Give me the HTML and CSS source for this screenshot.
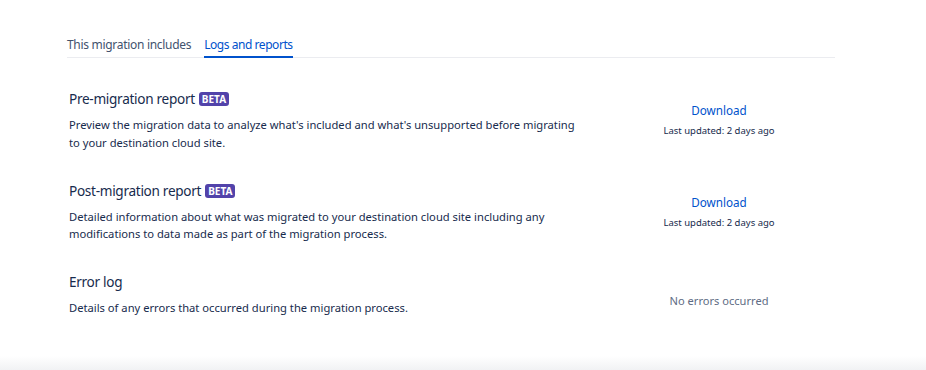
FILE: index.html
```html
<!DOCTYPE html>
<html>
<head>
<meta charset="utf-8">
<link rel="stylesheet" href="styles.css">
</head>
<body>
<div class="page">
  <div class="content">
    <nav class="tabs">
      <span class="tab">This migration includes</span>
      <span class="tab active">Logs and reports</span>
    </nav>
    <div class="rows">
      <div class="row">
        <div class="info">
          <h3 class="title">Pre-migration report <span class="lozenge">Beta</span></h3>
          <p class="desc">Preview the migration data to analyze what's included and what's unsupported before migrating to your destination cloud site.</p>
        </div>
        <div class="action">
          <a class="link">Download</a>
          <span class="meta">Last updated: 2 days ago</span>
        </div>
      </div>
      <div class="row">
        <div class="info">
          <h3 class="title">Post-migration report <span class="lozenge">Beta</span></h3>
          <p class="desc">Detailed information about what was migrated to your destination cloud site including any modifications to data made as part of the migration process.</p>
        </div>
        <div class="action">
          <a class="link">Download</a>
          <span class="meta">Last updated: 2 days ago</span>
        </div>
      </div>
      <div class="row">
        <div class="info">
          <h3 class="title">Error log</h3>
          <p class="desc">Details of any errors that occurred during the migration process.</p>
        </div>
        <div class="action action-low">
          <span class="muted">No errors occurred</span>
        </div>
      </div>
    </div>
  </div>
  <div class="footer"></div>
</div>
</body>
</html>
```
FILE: styles.css
```css
* { box-sizing: border-box; }
html, body { margin: 0; padding: 0; background: #fff; }
body {
  font-family: "Noto Sans", "Open Sans", sans-serif;
  color: #172B4D;
  width: 926px;
  height: 370px;
  overflow: hidden;
}
.page {
  display: flex;
  flex-direction: column;
  height: 370px;
}
.content {
  flex: 1;
  padding: 34px 91px 0 67px;
}
.tabs {
  display: flex;
  gap: 13px;
  border-bottom: 1px solid #EBECF0;
  height: 24px;
}
.tab {
  font-size: 12px;
  letter-spacing: -0.3px;
  line-height: 21px;
  color: #42526E;
  height: 24px;
}
.tab.active {
  color: #0052CC;
  border-bottom: 2px solid #0052CC;
  letter-spacing: -0.45px;
}
.rows {
  display: flex;
  flex-direction: column;
  padding-top: 31px;
  gap: 29.5px;
}
.row {
  display: grid;
  grid-template-columns: 516px 232px;
  column-gap: 20px;
  align-items: center;
}
.info { padding-left: 2px; }
.title {
  margin: 0;
  font-size: 13.6px;
  letter-spacing: -0.3px;
  font-weight: 400;
  line-height: 20px;
  color: #172B4D;
  display: flex;
  align-items: center;
  gap: 4px;
}
.lozenge {
  display: inline-block;
  background: #5243AA;
  color: #fff;
  font-size: 10px;
  font-weight: 700;
  letter-spacing: 0;
  text-transform: uppercase;
  line-height: 14px;
  padding: 0 3px;
  border-radius: 3px;
}
.desc {
  margin: 7px 0 0;
  font-size: 11.2px;
  line-height: 17.5px;
}
.action {
  display: flex;
  flex-direction: column;
  align-items: center;
  gap: 6px;
}
.action-low { padding-top: 13px; }
.link {
  color: #0052CC;
  font-size: 11.7px;
  line-height: 16px;
}
.meta {
  font-size: 9.5px;
  line-height: 14px;
}
.muted {
  color: #5E6C84;
  font-size: 11.1px;
}
.footer {
  height: 14px;
  background: linear-gradient(#fff, #F1F2F4);
}
```
